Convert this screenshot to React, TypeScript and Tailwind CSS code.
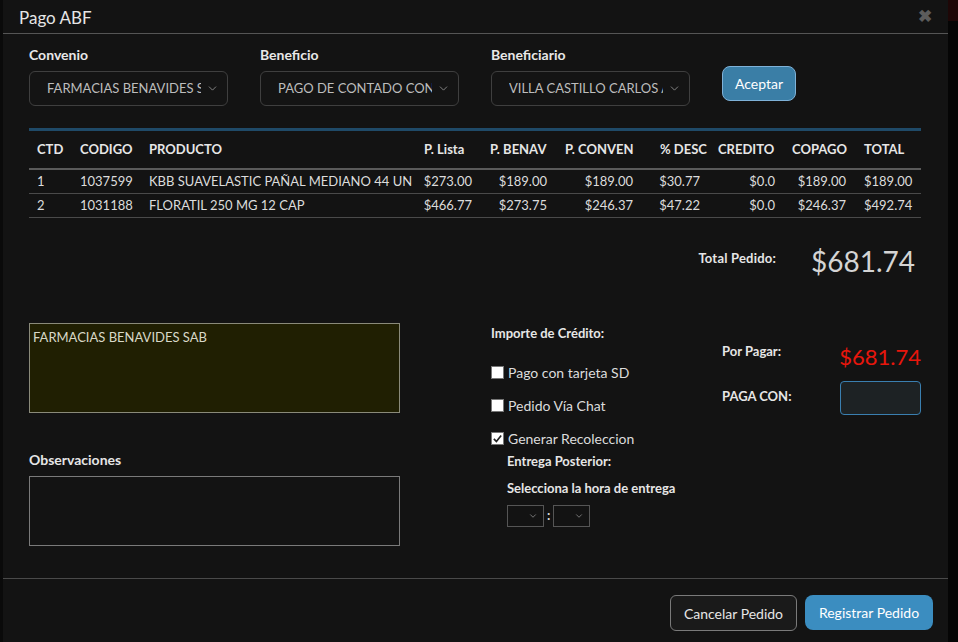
import { ChevronDown } from 'lucide-react';

const font = { fontFamily: 'Lato, "Liberation Sans", sans-serif' };

function FakeSelect({ label, value }: { label: string; value: string }) {
	return (
		<div className="w-[199px]">
			<div className="text-[14px] font-bold text-[#e8e8e8] leading-5 mb-[6px]">{label}</div>
			<div className="h-[35px] rounded-md border border-[#3f3f3f] bg-[#141414] flex items-center pl-[17px] pr-[8px]">
				<span className="w-[154px] overflow-hidden whitespace-nowrap text-[13px] text-[#bdbdbd]">{value}</span>
				<ChevronDown className="ml-auto h-[13px] w-[13px] text-[#9a9a9a]" strokeWidth={1.5} />
			</div>
		</div>
	);
}

function Check({ checked }: { checked?: boolean }) {
	return (
		<span className="inline-flex h-[13px] w-[13px] items-center justify-center border border-[#777] bg-white">
			{checked && (
				<svg viewBox="0 0 12 12" className="h-[11px] w-[11px]">
					<path d="M2 6.5 L4.8 9.2 L10 2.8" fill="none" stroke="#222" strokeWidth="1.8" />
				</svg>
			)}
		</span>
	);
}

const rows = [
	['1', '1037599', 'KBB SUAVELASTIC PAÑAL MEDIANO 44 UN', '$273.00', '$189.00', '$189.00', '$30.77', '$0.0', '$189.00', '$189.00'],
	['2', '1031188', 'FLORATIL 250 MG 12 CAP', '$466.77', '$273.75', '$246.37', '$47.22', '$0.0', '$246.37', '$492.74'],
];

const heads = ['CTD', 'CODIGO', 'PRODUCTO', 'P. Lista', 'P. BENAV', 'P. CONVEN', '% DESC', 'CREDITO', 'COPAGO', 'TOTAL'];
const cellCls = [
	'pl-[8px]',
	'pl-[8px]',
	'pl-[8px] whitespace-nowrap',
	'text-right pr-[10px]',
	'text-right pr-[10px]',
	'text-right pr-[19px]',
	'text-right pr-[10px]',
	'text-right pr-[9px]',
	'text-right pr-[10px]',
	'pl-[8px]',
];
const grid = 'grid grid-cols-[43px_69px_275px_66px_75px_95px_58px_74px_72px_64px]';

export default function App() {
	return (
		<div className="h-[642px] w-[958px] overflow-hidden bg-[#050505] flex" style={font}>
			<div className="w-[3px] bg-[#0a0a0a]" />
			<div className="w-[945px] h-[642px] bg-[#131313] flex flex-col text-[#e0e0e0]">
				{/* Header */}
				<div className="h-[34px] shrink-0 border-b border-[#555] flex items-center pl-[16px] pr-[16px]">
					<span className="text-[17px] text-[#e6e6e6] mt-[2px]">Pago ABF</span>
					<span className="ml-auto text-[#5c5c5c] text-[17px] font-bold leading-none mt-[-2px]">✖</span>
				</div>

				{/* Body */}
				<div className="h-[544px] shrink-0 px-[26px] pt-[11px]">
					<div className="flex gap-[32px] items-start">
						<FakeSelect label="Convenio" value="FARMACIAS BENAVIDES SAB" />
						<FakeSelect label="Beneficio" value="PAGO DE CONTADO CON DESC" />
						<FakeSelect label="Beneficiario" value="VILLA CASTILLO CARLOS ALBERTO" />
						<button className="mt-[21px] h-[35px] w-[74px] rounded-lg border border-[#7fb2d8] bg-[#3a7ea6] text-[14px] text-white">
							Aceptar
						</button>
					</div>

					{/* Table */}
					<div className="mt-[22px] w-[892px] border-t-[3px] border-[#1f4a68]">
						<div className={`${grid} h-[39px] items-center border-b-2 border-[#5a5a5a] text-[13px] font-bold text-[#e6e6e6]`}>
							{heads.map((h) => (
								<div key={h} className="pl-[8px] whitespace-nowrap">{h}</div>
							))}
						</div>
						{rows.map((r) => (
							<div key={r[0]} className={`${grid} h-[24px] items-center border-b border-[#4a4a4a] text-[13px] text-[#dcdcdc]`}>
								{r.map((c, i) => (
									<div key={i} className={cellCls[i]}>{c}</div>
								))}
							</div>
						))}
					</div>

					<div className="mt-[26px] flex justify-end items-start pr-[7px]">
						<span className="text-[13px] font-bold text-[#e6e6e6] mt-[5px] tracking-[0.2px]">Total Pedido:</span>
						<span className="ml-[35px] text-[28px] leading-[34px] text-[#d4d4d4]">$681.74</span>
					</div>

					{/* Lower section */}
					<div className="mt-[45px] flex">
						<div className="w-[371px]">
							<div className="h-[90px] border border-[#8a8a7a] bg-[#201f02] px-[3px] pt-[4px] text-[13px] text-[#d8d8c8]">
								FARMACIAS BENAVIDES SAB
							</div>
							<div className="mt-[36px] text-[14px] font-bold text-[#e6e6e6]">Observaciones</div>
							<div className="mt-[6px] h-[70px] border border-[#7a7a7a] bg-[#131313]" />
						</div>

						<div className="ml-[91px] w-[231px]">
							<div className="text-[13px] font-bold text-[#e6e6e6] mt-[1px]">Importe de Crédito:</div>
							<label className="mt-[18px] flex items-center gap-[4px] text-[14px] text-[#dcdcdc]">
								<Check />
								Pago con tarjeta SD
							</label>
							<label className="mt-[12px] flex items-center gap-[4px] text-[14px] text-[#dcdcdc]">
								<Check />
								Pedido Vía Chat
							</label>
							<label className="mt-[12px] flex items-center gap-[4px] text-[14px] text-[#dcdcdc]">
								<Check checked />
								Generar Recoleccion
							</label>
							<div className="pl-[16px]">
								<div className="mt-[3px] text-[13px] font-bold text-[#e6e6e6]">Entrega Posterior:</div>
								<div className="mt-[8px] text-[13px] font-bold text-[#e6e6e6]">Selecciona la hora de entrega</div>
								<div className="mt-[6px] flex items-center gap-[2px]">
									<div className="h-[22px] w-[37px] border border-[#555] flex items-center justify-end pr-[5px]">
										<ChevronDown className="h-[10px] w-[10px] text-[#888]" />
									</div>
									<span className="text-[13px] font-bold text-[#ddd] px-[1px]">:</span>
									<div className="h-[22px] w-[37px] border border-[#555] flex items-center justify-end pr-[5px]">
										<ChevronDown className="h-[10px] w-[10px] text-[#888]" />
									</div>
								</div>
							</div>
						</div>

						<div className="w-[199px]">
							<div className="mt-[18px] flex items-start">
								<span className="text-[13px] font-bold text-[#e6e6e6] mt-[1px]">Por Pagar:</span>
								<span className="ml-auto mt-[3px] text-[22px] leading-[26px] text-[#e8160c]">$681.74</span>
							</div>
							<div className="mt-[11px] flex items-start">
								<span className="text-[13px] font-bold text-[#e6e6e6] mt-[6px]">PAGA CON:</span>
								<div className="ml-auto h-[34px] w-[81px] rounded border border-[#3a7fb0] bg-[#1d2224]" />
							</div>
						</div>
					</div>
				</div>

				{/* Footer */}
				<div className="flex-1 border-t border-[#4a4a4a] flex justify-end items-start gap-[8px] pr-[15px] pt-[16px]">
					<button className="h-[36px] w-[127px] rounded-md border border-[#7a7a7a] bg-[#1a1a1a] text-[14px] text-[#e6e6e6]">
						Cancelar Pedido
					</button>
					<button className="h-[35px] w-[128px] rounded-lg bg-[#3b8dc0] text-[14px] text-white">
						Registrar Pedido
					</button>
				</div>
			</div>
			<div className="flex-1 flex flex-col">
				<div className="h-[21px] bg-[#1e0707]" />
			</div>
		</div>
	);
}
